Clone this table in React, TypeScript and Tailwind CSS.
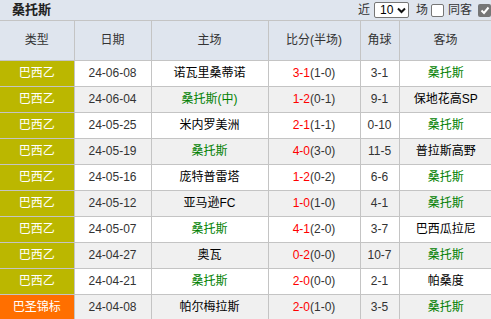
import React from "react";

type Row = {
  league: string;
  date: string;
  home: string;
  homeGreen?: boolean;
  score: string;
  half: string;
  corner: string;
  away: string;
  awayGreen?: boolean;
  cup?: boolean;
};

const rows: Row[] = [
  { league: "巴西乙", date: "24-06-08", home: "诺瓦里桑蒂诺", score: "3-1", half: "(1-0)", corner: "3-1", away: "桑托斯", awayGreen: true },
  { league: "巴西乙", date: "24-06-04", home: "桑托斯(中)", homeGreen: true, score: "1-2", half: "(0-1)", corner: "9-1", away: "保地花高SP" },
  { league: "巴西乙", date: "24-05-25", home: "米内罗美洲", score: "2-1", half: "(1-1)", corner: "0-10", away: "桑托斯", awayGreen: true },
  { league: "巴西乙", date: "24-05-19", home: "桑托斯", homeGreen: true, score: "4-0", half: "(3-0)", corner: "11-5", away: "普拉斯高野" },
  { league: "巴西乙", date: "24-05-16", home: "庞特普雷塔", score: "1-2", half: "(0-2)", corner: "6-6", away: "桑托斯", awayGreen: true },
  { league: "巴西乙", date: "24-05-12", home: "亚马逊FC", score: "1-0", half: "(1-0)", corner: "4-1", away: "桑托斯", awayGreen: true },
  { league: "巴西乙", date: "24-05-07", home: "桑托斯", homeGreen: true, score: "4-1", half: "(2-0)", corner: "3-7", away: "巴西瓜拉尼" },
  { league: "巴西乙", date: "24-04-27", home: "奥瓦", score: "0-2", half: "(0-0)", corner: "10-7", away: "桑托斯", awayGreen: true },
  { league: "巴西乙", date: "24-04-21", home: "桑托斯", homeGreen: true, score: "2-0", half: "(0-0)", corner: "2-1", away: "帕桑度" },
  { league: "巴圣锦标", date: "24-04-08", home: "帕尔梅拉斯", score: "2-0", half: "(1-0)", corner: "3-5", away: "桑托斯", awayGreen: true, cup: true },
];

const font = { fontFamily: '"Liberation Sans", Arial, "Noto Sans CJK SC", sans-serif' };

export default function App() {
  return (
    <div className="w-[491px] h-[319px] overflow-hidden bg-white text-[12px] text-[#222]" style={font}>
      {/* title bar */}
      <div className="h-[21px] bg-[#dfe5ee] flex items-center justify-between pl-[12px] border-b border-[#c4c4c4]">
        <span className="font-bold text-[13px] text-[#222]">桑托斯</span>
        <div className="flex items-center text-[12px] text-[#333]">
          <span>近</span>
          <span className="ml-[4px] w-[35px] h-[16px] bg-white border border-[#767676] rounded-[2px] flex items-center justify-between pl-[5px] pr-[2px] text-[12px] text-black">
            10
            <svg width="9" height="7" viewBox="0 0 9 7"><path d="M1 1.5 L4.5 5 L8 1.5" stroke="#111" strokeWidth="2" fill="none" /></svg>
          </span>
          <span className="ml-[7px]">场</span>
          <span className="ml-[3px] w-[13px] h-[13px] bg-white border border-[#767676] rounded-[2px]" />
          <span className="ml-[4px]">同客</span>
          <span className="ml-[6px] w-[13px] h-[13px] bg-[#767676] rounded-[2px] flex items-center justify-center">
            <svg width="10" height="9" viewBox="0 0 10 9"><path d="M1.5 4.5 L4 7 L8.5 1.5" stroke="#fff" strokeWidth="2" fill="none" /></svg>
          </span>
        </div>
      </div>

      <table className="table-fixed border-collapse w-[492px] text-center">
        <colgroup>
          <col className="w-[74px]" />
          <col className="w-[77px]" />
          <col className="w-[117px]" />
          <col className="w-[92px]" />
          <col className="w-[39px]" />
          <col className="w-[93px]" />
        </colgroup>
        <thead>
          <tr className="h-[39px] bg-[#dfe5ee] text-[#333]">
            {["类型", "日期", "主场", "比分(半场)", "角球", "客场"].map((h, i) => (
              <th key={h} className={`font-normal border-r border-b border-[#c4c4c4] p-0 ${i === 0 ? "" : ""}`}>
                {h}
              </th>
            ))}
          </tr>
        </thead>
        <tbody>
          {rows.map((r, i) => (
            <tr key={r.date} className={`h-[26px] ${i % 2 === 1 ? "bg-[#f0f0f0]" : "bg-white"}`}>
              <td className={`border-r border-b border-[#c4c4c4] p-0 text-white ${r.cup ? "bg-[#ff6f00]" : "bg-[#bbb700]"}`}>
                {r.league}
              </td>
              <td className="border-r border-b border-[#c4c4c4] p-0 text-[#333]">{r.date}</td>
              <td className={`border-r border-b border-[#c4c4c4] p-0 whitespace-nowrap ${r.homeGreen ? "text-[#007f00]" : "text-black"}`}>
                {r.home}
              </td>
              <td className="border-r border-b border-[#c4c4c4] p-0 text-[#333]">
                <span className="text-[#ff0000]">{r.score}</span>
                {r.half}
              </td>
              <td className="border-r border-b border-[#c4c4c4] p-0 text-[#333]">{r.corner}</td>
              <td className={`border-b border-[#c4c4c4] p-0 whitespace-nowrap ${r.awayGreen ? "text-[#007f00]" : "text-black"}`}>
                {r.away}
              </td>
            </tr>
          ))}
        </tbody>
      </table>
    </div>
  );
}
